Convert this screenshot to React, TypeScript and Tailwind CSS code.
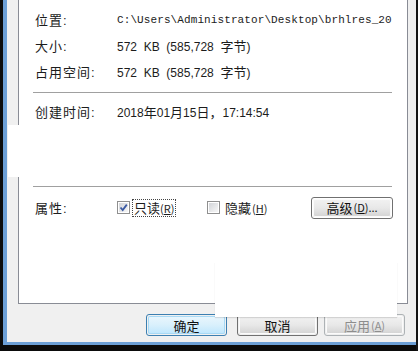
import React from 'react';

const cjk = "font-['Noto_Sans_CJK_SC',sans-serif]";

const Label = ({ text }: { text: string }) => (
  <div className={`w-[82px] shrink-0 text-[13px] tracking-[1px] leading-none text-[#1c1c1c] ${cjk}`}>
    {text}
    <span className="font-['Liberation_Sans'] tracking-normal">:</span>
  </div>
);

const Checkbox = ({ checked }: { checked?: boolean }) => (
  <div className="w-[13px] h-[13px] shrink-0 border border-[#8f8f8f] bg-white p-[1px]">
    <div className="w-full h-full bg-linear-to-br from-[#d2d4d8] to-[#f7f7f7] flex items-center justify-center">
      {checked && (
        <svg width="9" height="9" viewBox="0 0 9 9">
          <path d="M1.5 4.5 L3.7 7 L7.8 1.6" fill="none" stroke="#3b5aa3" strokeWidth="1.8" />
        </svg>
      )}
    </div>
  </div>
);

const WinButton = ({
  children,
  primary,
  disabled,
  className = '',
}: {
  children: React.ReactNode;
  primary?: boolean;
  disabled?: boolean;
  className?: string;
}) => (
  <div
    className={`h-[22px] w-[81px] shrink-0 rounded-[3px] border p-[1px] ${
      primary ? 'border-[#3c7fb1]' : disabled ? 'border-[#adb2b5]' : 'border-[#707070]'
    } ${className}`}
  >
    <div
      className={`h-full w-full rounded-[2px] flex items-center justify-center text-[13px] leading-none ${cjk} ${
        primary
          ? 'bg-linear-to-b from-[#eaf6fd] via-[#d9f0fc] to-[#bee6fd] shadow-[inset_0_0_0_1px_#a7d9f5]'
          : 'bg-linear-to-b from-[#f2f2f2] via-[#e8e8e8] to-[#d3d3d3] shadow-[inset_0_0_0_1px_#fbfbfb]'
      } ${disabled ? 'text-[#8d8d8d]' : 'text-[#111]'}`}
    >
      {children}
    </div>
  </div>
);

const Separator = ({ className = '' }: { className?: string }) => (
  <div className={`h-px ml-[14px] mr-[15px] bg-[#a0a0a0] ${className}`} />
);

export default function App() {
  return (
    <div className="relative w-[420px] h-[351px] bg-white flex overflow-hidden font-['Liberation_Sans','Noto_Sans_CJK_SC',sans-serif]">
      <div className="w-[416px] h-full bg-[#0b0b0b] pl-[3px] pb-[6px] flex flex-col">
        <div className="flex-1 flex flex-col bg-[#f0f0f0] border-l-[4px] border-b-[3px] border-[#6c9fd6]">
          {/* property sheet */}
          <div className="ml-[11px] mr-[8px] h-[304px] shrink-0 bg-white border-l border-r border-b border-[#898c95] flex flex-col pt-[7px]">
            <div className="flex items-center h-[26px] pl-[16px]">
              <Label text="位置" />
              <div className="w-[275px] overflow-hidden whitespace-pre font-['Liberation_Mono',monospace] text-[11px] tracking-[0.1px] text-[#1c1c1c] leading-none">
                {'C:\\Users\\Administrator\\Desktop\\brhlres_20'}
              </div>
            </div>
            <div className="flex items-center h-[26px] pl-[16px]">
              <Label text="大小" />
              <div className="whitespace-pre text-[12px] text-[#1c1c1c] leading-none">
                {'572  KB  (585,728  '}
                <span className={`text-[13px] ${cjk}`}>字节</span>)
              </div>
            </div>
            <div className="flex items-center h-[26px] pl-[16px]">
              <Label text="占用空间" />
              <div className="whitespace-pre text-[12px] text-[#1c1c1c] leading-none">
                {'572  KB  (585,728  '}
                <span className={`text-[13px] ${cjk}`}>字节</span>)
              </div>
            </div>
            <Separator className="mt-[7px]" />
            <div className="flex items-center h-[26px] pl-[16px] mt-[6px]">
              <Label text="创建时间" />
              <div className="whitespace-pre text-[12px] text-[#1c1c1c] leading-none">
                2018<span className={`text-[13px] ${cjk}`}>年</span>01
                <span className={`text-[13px] ${cjk}`}>月</span>15
                <span className={`text-[13px] ${cjk}`}>日，</span>17:14:54
              </div>
            </div>
            <Separator className="mt-[61px]" />
            <div className="flex items-center h-[23px] pl-[16px] mt-[9px]">
              <Label text="属性" />
              <div className="w-[90px] flex items-center gap-[2px]">
                <Checkbox checked />
                <span className={`border border-dotted border-[#444] px-px text-[13px] leading-[15px] text-[#1c1c1c] ${cjk}`}>
                  只读<span className="text-[11px]">(<u>R</u>)</span>
                </span>
              </div>
              <div className="w-[104px] flex items-center gap-[5px]">
                <Checkbox />
                <span className={`text-[13px] leading-none text-[#1c1c1c] ${cjk}`}>
                  隐藏<span className="text-[11px] ml-px">(<u>H</u>)</span>
                </span>
              </div>
              <WinButton className="h-[21px] w-[82px]">
                高级<span className="text-[11px] ml-px">(<u>D</u>)...</span>
              </WinButton>
            </div>
          </div>
          {/* dialog buttons */}
          <div className="flex items-start pl-[139px] pt-[10px]">
            <WinButton primary>确定</WinButton>
            <WinButton className="ml-[10px]">取消</WinButton>
            <WinButton disabled className="ml-[6px]">
              应用<span className="text-[11px] ml-px">(<u>A</u>)</span>
            </WinButton>
          </div>
        </div>
      </div>
      <div className="w-[2px] h-full bg-[#141414]" />
      <div className="flex-1 h-full bg-white" />

      {/* erased watermark patches over the screenshot */}
      <div className="absolute left-[8px] top-[125px] w-[12px] h-[52px] bg-white" />
      <div className="absolute left-[215px] top-[262px] w-[182px] h-[55px] bg-white shadow-[0_1px_1px_rgba(0,0,0,0.12)]" />
    </div>
  );
}
